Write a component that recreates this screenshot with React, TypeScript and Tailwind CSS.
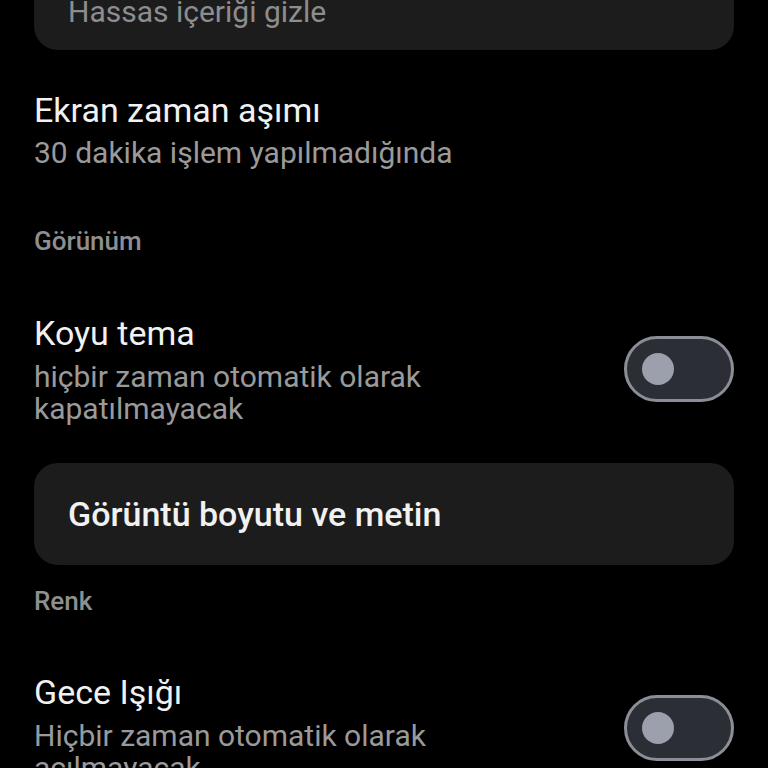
import React from "react";

function Toggle() {
  return (
    <div className="flex h-[66px] w-[110px] shrink-0 items-center rounded-full border-[3px] border-[#8b8e97] bg-[#2c2e36] pl-[15px]">
      <div className="h-[32px] w-[32px] rounded-full bg-[#9c9fac]"></div>
    </div>
  );
}

export default function App() {
  return (
    <main
      className="h-[768px] w-[768px] overflow-hidden bg-black px-[34px]"
      style={{ fontFamily: "Roboto, 'Noto Sans', sans-serif" }}
    >
      {/* Hidden content card (cut off at top) */}
      <div className="-mt-[50px] flex h-[100px] items-end rounded-[24px] bg-[#1c1c1c] px-[34px] pb-[21px]">
        <p className="text-[30px] leading-[34px] text-[#8d8d8d]">Hassas içeriği gizle</p>
      </div>

      {/* Screen timeout */}
      <div className="mt-[40px]">
        <p className="text-[34px] leading-[40px] text-[#f1f1f1]">Ekran zaman aşımı</p>
        <p className="mt-[6px] text-[30px] leading-[34px] text-[#9a9a9a]">30 dakika işlem yapılmadığında</p>
      </div>

      {/* Görünüm */}
      <p className="mt-[57px] text-[26px] font-medium leading-[28px] text-[#8f8f8f]">Görünüm</p>

      <div className="mt-[58px] flex items-center justify-between">
        <div>
          <p className="text-[34px] leading-[40px] text-[#f1f1f1]">Koyu tema</p>
          <p className="mt-[8px] text-[30px] leading-[32px] text-[#9a9a9a]">
            hiçbir zaman otomatik olarak
            <br />
            kapatılmayacak
          </p>
        </div>
        <Toggle />
      </div>

      <div className="mt-[38px] flex h-[102px] items-center rounded-[24px] bg-[#1c1c1c] px-[34px]">
        <p className="text-[34px] font-medium leading-[40px] text-[#f1f1f1]">Görüntü boyutu ve metin</p>
      </div>

      {/* Renk */}
      <p className="mt-[22px] text-[26px] font-medium leading-[28px] text-[#8f8f8f]">Renk</p>

      <div className="mt-[57px] flex items-center justify-between">
        <div>
          <p className="text-[34px] leading-[40px] text-[#f1f1f1]">Gece Işığı</p>
          <p className="mt-[8px] text-[30px] leading-[32px] text-[#9a9a9a]">
            Hiçbir zaman otomatik olarak
            <br />
            açılmayacak
          </p>
        </div>
        <Toggle />
      </div>
    </main>
  );
}
